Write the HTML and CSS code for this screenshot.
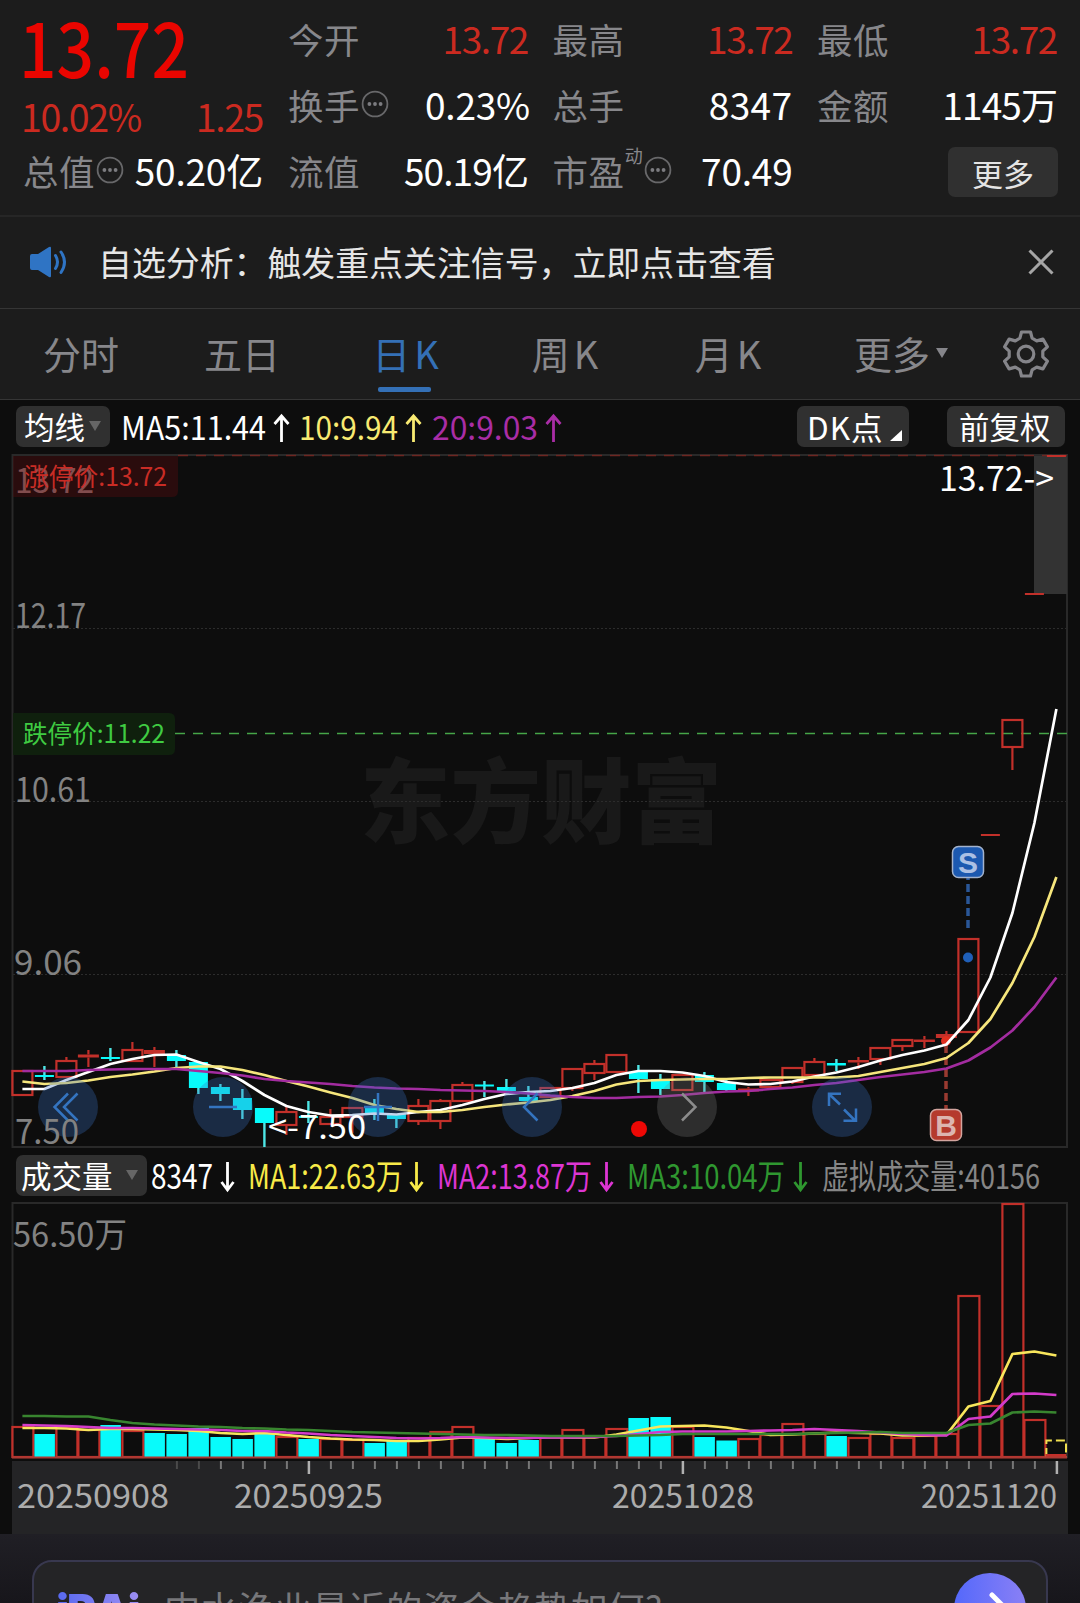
FILE: index.html
```html
<!DOCTYPE html>
<html lang="zh-CN">
  <head>
    <meta charset="UTF-8" />
    <meta name="viewport" content="width=device-width, initial-scale=1.0" />
    <title>日K</title>
    <link rel="stylesheet" href="styles.css">
  </head>
  <body>
    <svg class="defs" width="0" height="0">
      <symbol id="more-dots" viewBox="0 0 28 28">
        <circle cx="14" cy="14" r="12.4" fill="none" stroke="#68686a" stroke-width="1.8" />
        <circle cx="8.4" cy="14" r="1.9" fill="#7c7c80" />
        <circle cx="14" cy="14" r="1.9" fill="#7c7c80" />
        <circle cx="19.6" cy="14" r="1.9" fill="#7c7c80" />
      </symbol>
    </svg>

    <header class="quote">
      <div class="quote-main">
        <svg class="price" width="180" height="81" viewBox="0 0 180 81">
          <text x="-4" y="73" textLength="170" lengthAdjust="spacingAndGlyphs">13.72</text>
        </svg>
        <div class="change"><span>10.02%</span><span>1.25</span></div>
        <div class="cell">
          <span class="label">总值</span><svg class="dots"><use href="#more-dots" /></svg>
          <span class="value">50.20亿</span>
        </div>
      </div>
      <div class="quote-grid">
        <div class="cell"><span class="label">今开</span><span class="value up">13.72</span></div>
        <div class="cell"><span class="label">最高</span><span class="value up">13.72</span></div>
        <div class="cell"><span class="label">最低</span><span class="value up">13.72</span></div>
        <div class="cell">
          <span class="label">换手</span><svg class="dots"><use href="#more-dots" /></svg>
          <span class="value percent">0.23%</span>
        </div>
        <div class="cell"><span class="label">总手</span><span class="value wide">8347</span></div>
        <div class="cell"><span class="label">金额</span><span class="value tight">1145万</span></div>
        <div class="cell"><span class="label">流值</span><span class="value tight">50.19亿</span></div>
        <div class="cell">
          <span class="label">市盈</span><span class="sup">动</span><svg class="dots"><use href="#more-dots" /></svg>
          <span class="value">70.49</span>
        </div>
        <div class="cell"><button class="more">更多</button></div>
      </div>
    </header>

    <div class="notice">
      <svg class="speaker" width="40" height="34" viewBox="0 0 40 34">
        <path d="M3 9h6L20 2q2-1 2 1v28q0 2-2 1L9 25H3q-2 0-2-2V11q0-2 2-2z" fill="#2f74c4" />
        <path d="M26.500 10.500q4 6.500 0 13M32 7q7 10 0 20.500" fill="none" stroke="#2f74c4" stroke-width="3" stroke-linecap="round" />
      </svg>
      <span class="notice-text">自选分析：触发重点关注信号，立即点击查看</span>
      <svg class="close" width="26" height="26" viewBox="0 0 26 26">
        <path d="M1.500 1.500l23 23M24.500 1.500l-23 23" stroke="#a5a5a5" stroke-width="3" />
      </svg>
    </div>

    <nav class="tabs">
      <span class="tab">分时</span>
      <span class="tab">五日</span>
      <span class="tab active">日<b>K</b></span>
      <span class="tab">周<b>K</b></span>
      <span class="tab">月<b>K</b></span>
      <span class="tab last">更多<i class="caret"></i></span>
      <svg class="gear" width="50" height="50" viewBox="0 0 50 50" fill="none" stroke="#85858a" stroke-width="3.200" stroke-linejoin="round">
        <path d="M20.500 3h9l1.600 6.200 4.600 2.700 6.200-1.800 4.500 7.700-4.600 4.400v5.600l4.600 4.400-4.500 7.700-6.200-1.800-4.600 2.700L29.500 47h-9l-1.600-6.200-4.600-2.700-6.200 1.800-4.500-7.700 4.600-4.400v-5.600l-4.600-4.400 4.500-7.700 6.200 1.800 4.600-2.700z" />
        <circle cx="25" cy="25" r="7.800" />
      </svg>
    </nav>

    <section class="toolbar">
      <button class="pill ma">均线<i class="caret"></i></button>
      <svg class="legend" width="460" height="48" viewBox="118 402 460 48" font-size="32">
        <text x="121" y="441" textLength="145" lengthAdjust="spacingAndGlyphs" fill="#ffffff">MA5:11.44</text>
        <text x="299" y="441" textLength="99" lengthAdjust="spacingAndGlyphs" fill="#f8ea72">10:9.94</text>
        <text x="432" y="441" textLength="106" lengthAdjust="spacingAndGlyphs" fill="#a92da6">20:9.03</text>
        <path d="M281.500 443v-26m-7 8l7-8 7 8" stroke="#ffffff" />
        <path d="M413.500 443v-26m-7 8l7-8 7 8" stroke="#f8ea72" />
        <path d="M553.500 443v-26m-7 8l7-8 7 8" stroke="#a92da6" />
      </svg>
      <button class="pill dk">DK点<i class="corner"></i></button>
      <button class="pill adjust">前复权</button>
    </section>

    <svg id="price-chart" class="chart" width="1080" height="700" viewBox="0 450 1080 700"></svg>

    <section class="toolbar volume">
      <button class="pill vol">成交量<i class="caret"></i></button>
      <svg class="legend" width="920" height="50" viewBox="150 1151 920 50" font-size="34">
        <text x="151" y="1189" textLength="62" lengthAdjust="spacingAndGlyphs" fill="#ffffff">8347</text>
        <text x="248" y="1189" textLength="155" lengthAdjust="spacingAndGlyphs" fill="#f8ea48">MA1:22.63万</text>
        <text x="437" y="1189" textLength="155" lengthAdjust="spacingAndGlyphs" fill="#dd35d3">MA2:13.87万</text>
        <text x="627" y="1189" textLength="158" lengthAdjust="spacingAndGlyphs" fill="#2f9730">MA3:10.04万</text>
        <text x="822" y="1189" textLength="218" lengthAdjust="spacingAndGlyphs" fill="#868686">虚拟成交量:40156</text>
        <path d="M227.500 1162v28m-6-8l6 8 6-8" stroke="#ffffff" />
        <path d="M416.500 1162v28m-6-8l6 8 6-8" stroke="#f8ea48" />
        <path d="M606.500 1162v28m-6-8l6 8 6-8" stroke="#dd35d3" />
        <path d="M800.500 1162v28m-6-8l6 8 6-8" stroke="#2f9730" />
      </svg>
    </section>

    <svg id="volume-chart" class="chart" width="1080" height="334" viewBox="0 1200 1080 334"></svg>

    <footer class="ai">
      <div class="ask">
        <span class="logo">iRAi</span>
        <span class="question">中水渔业最近的资金趋势如何?</span>
        <span class="go">
          <svg width="72" height="72" viewBox="0 0 72 72">
            <path d="M20 36h32M38 22l14 14-14 14" fill="none" stroke="#fff" stroke-width="5" stroke-linecap="round" />
          </svg>
        </span>
      </div>
    </footer>

    <script src="script.js"></script>
  </body>
</html>
```

FILE: styles.css
```css
:root {
  --bg: #0d0d0d;
  --panel: #1c1c1c;
  --muted: #87878b;
  --up: #cb2a20;
  --blue: #3470b6;
}

* {
  margin: 0;
  padding: 0;
  box-sizing: border-box;
}

body {
  width: 1080px;
  height: 1603px;
  overflow: hidden;
  background: var(--bg);
  color: #fff;
  font-family: "Noto Sans CJK SC", sans-serif;
}

svg {
  display: block;
  flex: none;
}

.defs {
  position: absolute;
}

button {
  border: none;
  font-family: inherit;
  color: #fff;
  background: #303030;
  border-radius: 7px;
}

/* quote header */

.quote {
  display: flex;
  gap: 25px;
  height: 217px;
  padding: 5px 23px 0 23px;
  background: var(--panel);
  border-bottom: 2px solid #262626;
}

.quote-main {
  width: 240px;
  flex: none;
}

.price {
  overflow: visible;
  font-size: 75px;
  font-weight: 500;
  fill: #ea0500;
}

.change {
  display: flex;
  justify-content: space-between;
  height: 51px;
  margin-left: -2px;
  font-size: 37.5px;
  line-height: 60px;
  letter-spacing: -1.4px;
  color: var(--up);
}

.quote-grid {
  flex: 1;
  display: grid;
  grid-template-columns: repeat(3, 240px);
  grid-auto-rows: 66px;
  column-gap: 24.5px;
}

.cell {
  display: flex;
  align-items: center;
  height: 66px;
  white-space: nowrap;
}

.label {
  font-size: 35.5px;
  letter-spacing: 0.6px;
  color: var(--muted);
}

.value {
  margin-left: auto;
  font-size: 37px;
  letter-spacing: -0.2px;
}

.value.percent {
  margin-right: -2px;
}

.value.wide {
  letter-spacing: 0.4px;
}

.value.up {
  letter-spacing: -1.4px;
  color: var(--up);
}

.value.tight {
  letter-spacing: -0.9px;
}

.dots {
  width: 28px;
  height: 28px;
  margin-left: 1px;
}

.sup {
  align-self: flex-start;
  margin: 5px 0 0 0;
  font-size: 18px;
  color: var(--muted);
}

.more {
  width: 110px;
  height: 50px;
  margin: 4px -1px 0 auto;
  font-size: 31px;
  line-height: 45px;
  color: #e4e4e4;
}

/* notice */

.notice {
  display: flex;
  align-items: center;
  height: 92px;
  padding: 0 26px 2px 29px;
  background: var(--panel);
  border-bottom: 1px solid #353535;
}

.notice-text {
  margin-left: 29px;
  font-size: 33.9px;
  color: #e6e6e6;
}

.close {
  margin-left: auto;
}

/* period tabs */

.tabs {
  display: grid;
  grid-template-columns: 162px 160px 167px 152px 174px 186px 50px;
  align-items: center;
  height: 91px;
  background: var(--panel);
  border-bottom: 1px solid #353535;
}

.tab {
  display: flex;
  align-items: center;
  justify-content: center;
  position: relative;
  height: 90px;
  padding-bottom: 3px;
  font-size: 38px;
  color: var(--muted);
}

.tab.last {
  padding-right: 14px;
}

.tab b {
  margin-left: 4px;
  font-weight: 400;
}

.tab.active {
  color: var(--blue);
}

.tab.active::after {
  content: "";
  position: absolute;
  left: 56px;
  bottom: 7px;
  width: 53px;
  height: 5px;
  border-radius: 2px;
  background: var(--blue);
}

.caret {
  border: 6.5px solid transparent;
  border-top: 10px solid #666;
  border-bottom: none;
}

.tab .caret {
  margin-left: 6px;
  border-top-color: #85858a;
}

/* indicator rows */

.toolbar {
  display: flex;
  height: 50px;
  padding: 6px 0 0 16px;
}

.pill {
  display: flex;
  align-items: center;
  flex: none;
  height: 41px;
  padding-bottom: 1px;
  font-size: 30.5px;
}

.pill.ma {
  width: 94px;
  padding-left: 8px;
}

.pill .caret {
  margin-left: 4px;
}

.pill.dk {
  width: 112px;
  margin-left: 219px;
  padding-left: 10px;
  font-size: 31.5px;
  letter-spacing: 1px;
}

.pill.adjust {
  width: 118px;
  margin-left: 38px;
  padding-left: 12px;
}

.pill.vol {
  width: 131px;
  padding-left: 5px;
}

.pill.vol .caret {
  margin-left: 13px;
}

.corner {
  align-self: flex-end;
  margin: 0 0 5px 6px;
  border-left: 12px solid transparent;
  border-bottom: 11px solid #fff;
}

.legend {
  margin: -5px 0 0 8px;
}

.legend path {
  fill: none;
  stroke-width: 2.8;
}

.toolbar.volume {
  padding-top: 5px;
}

.toolbar.volume .legend {
  margin: -4px 0 0 3px;
}

/* charts */

.frame {
  fill: none;
  stroke: #292929;
  stroke-width: 2;
}

.grid {
  stroke: #2c2c2c;
  stroke-dasharray: 2 2;
}

.axis-label {
  font-size: 34px;
  fill: #828282;
}

.watermark {
  font-size: 92px;
  font-weight: 900;
  fill: #191919;
}

.rise {
  fill: none;
  stroke: #c2302a;
  stroke-width: 2.2;
}

.rise-flat {
  fill: #c2302a;
}

.fall {
  fill: #08fbfb;
}

.fall-wick {
  stroke: #4ee6e6;
  stroke-width: 2.4;
}

.ma-line {
  fill: none;
  stroke-width: 2.7;
  stroke-linejoin: round;
}

.control {
  fill: rgba(56, 113, 196, 0.3);
}

.control.off {
  fill: rgba(130, 130, 130, 0.28);
}

.control-icon {
  fill: none;
  stroke: #3474c0;
  stroke-width: 2.5;
}

.control-icon.off {
  stroke: #8c8c8c;
}

.badge-text {
  font: bold 30px "Liberation Sans", sans-serif;
  text-anchor: middle;
}

.date {
  font-size: 32px;
  fill: #acacac;
}

/* AI bar */

.ai {
  height: 69px;
  padding: 26px 32px 0;
  overflow: hidden;
  background: linear-gradient(#201f25, #17161b);
}

.ask {
  display: flex;
  align-items: center;
  height: 98px;
  padding: 0 20px 0 22px;
  border: 2px solid #38384f;
  border-radius: 20px;
  background: #242426;
}

.logo {
  width: 90px;
  margin-top: 1px;
  font: 900 44px Inter, sans-serif;
  letter-spacing: -2px;
  color: transparent;
  background: linear-gradient(90deg, #5668f0, #a291f2);
  background-clip: text;
  -webkit-background-clip: text;
}

.question {
  margin: -5px 0 0 18px;
  font-size: 36.4px;
  letter-spacing: 0.6px;
  color: #77777a;
}

.go {
  margin-left: auto;
  width: 72px;
  height: 72px;
  border-radius: 50%;
  background: linear-gradient(90deg, #5468fb, #8a80f5);
}
```

FILE: script.js
```js
const STEP = 22;
const cx = (i) => 22.4 + STEP * i;

// [rising, high, body top, body bottom, low] in chart pixels
const candles = [
  [1, 1071, 1071, 1095, 1095], [0, 1066, 1075, 1077, 1080], [1, 1057, 1061, 1077, 1077],
  [1, 1050, 1054.5, 1057.5, 1067], [0, 1048, 1057, 1059, 1061], [1, 1042, 1050, 1061, 1061],
  [1, 1047, 1050, 1054, 1067], [0, 1050, 1055, 1061, 1067], [0, 1062, 1062, 1088, 1094],
  [0, 1084, 1087, 1094, 1101], [0, 1089, 1098, 1110, 1119], [0, 1108, 1108, 1123, 1147],
  [1, 1107, 1112, 1125, 1135], [0, 1101, 1116, 1118, 1123], [1, 1109, 1117, 1124, 1125],
  [1, 1107, 1108, 1117, 1133], [0, 1099, 1107, 1114, 1120], [0, 1114, 1114, 1119, 1128],
  [1, 1099, 1106, 1121, 1125], [1, 1099, 1101, 1121, 1129], [1, 1082, 1085, 1101, 1101],
  [0, 1081, 1084.5, 1086.5, 1097], [0, 1079, 1087, 1091, 1091], [0, 1086, 1097, 1101, 1102],
  [1, 1087, 1088, 1097, 1097], [1, 1068, 1069, 1088, 1091], [1, 1060, 1064, 1073, 1080],
  [1, 1054, 1055, 1072, 1072], [0, 1065, 1072, 1079, 1093], [0, 1074, 1079, 1089, 1095],
  [1, 1074, 1075, 1090, 1090], [0, 1072, 1075, 1082, 1092], [0, 1080, 1083, 1090, 1091],
  [1, 1087, 1088.5, 1091.5, 1096], [1, 1080, 1080, 1087, 1090], [1, 1067, 1068, 1082, 1084],
  [1, 1058, 1062, 1075, 1075], [0, 1059, 1063, 1065.5, 1071], [1, 1057, 1060, 1062.5, 1069],
  [1, 1048, 1048, 1059, 1065], [1, 1040, 1040, 1046, 1051], [1, 1036, 1039.5, 1042, 1048],
  [1, 1031, 1034, 1038, 1048], [1, 939, 939, 1032, 1032], [1, 834, 834, 836, 836],
  [1, 720, 720, 747, 770], [1, 593, 593, 595, 595], [1, 455, 455, 457, 457],
];

const ma5 = [1089, 1089, 1080, 1072, 1064, 1059, 1055, 1054.5, 1062, 1069, 1081, 1095, 1106, 1112, 1115.5, 1115,
  1113.5, 1114.5, 1112, 1110, 1105, 1099, 1094, 1092, 1091, 1088, 1083, 1075, 1071, 1071, 1072.5, 1076, 1082,
  1084.5, 1084, 1081.5, 1076.5, 1072.5, 1067, 1060.5, 1055, 1050.5, 1044.5, 1020, 977.5, 913, 823, 709];
const ma10 = [1081.5, 1084, 1083, 1080.5, 1077, 1074.5, 1071.5, 1068, 1066.5, 1066.5, 1070, 1075, 1081, 1086.5,
  1092.5, 1098, 1105, 1109, 1112, 1112, 1110, 1107, 1104.5, 1102.5, 1100, 1096, 1091, 1084.5, 1081, 1080, 1079.5,
  1079, 1079, 1078, 1077.5, 1077.5, 1077.5, 1077.5, 1076, 1072, 1068, 1064, 1058, 1043, 1019, 983, 937, 877];
const ma20 = [1071, 1071, 1071, 1070, 1069.5, 1069, 1069, 1069, 1071, 1073, 1075.5, 1079, 1081, 1082.5, 1084, 1086,
  1087.5, 1088.5, 1089, 1090, 1090.5, 1091, 1092, 1093.5, 1095.5, 1097, 1098, 1098, 1097, 1096.5, 1095, 1093,
  1091.5, 1091, 1089, 1087.5, 1085, 1083, 1080, 1077, 1074.5, 1072, 1068.5, 1060.5, 1047.5, 1030.5, 1007, 977.5];

// volume bar tops, negative means a falling day
const volumes = [1427, -1434, 1427, 1430, -1425, 1431, -1433, -1434, -1428, -1437, -1439, -1434, 1437, -1439, 1439,
  1440, -1443, -1441, 1438, 1432, 1427, -1439, -1443, -1440, 1437, 1430, 1437, 1429, -1418, -1417, 1427, -1437,
  -1440.5, 1439, 1435, 1424, 1434, -1436, 1438, 1434, 1438, 1436, 1434, 1296, 1406, 1204, 1420, 1455];

const volMa1 = [1428, 1428, 1428.5, 1430, 1429, 1429, 1429.5, 1430, 1431, 1433, 1434, 1433, 1435, 1437, 1438.5,
  1439.5, 1440, 1441, 1441, 1439.5, 1437.5, 1438, 1439, 1438, 1437, 1437.5, 1437.5, 1434.5, 1430.5, 1426.5, 1426,
  1425.5, 1427.5, 1431, 1435, 1434.5, 1433.5, 1432.5, 1433, 1433.5, 1435.5, 1435.5, 1435, 1406.5, 1401, 1354,
  1351.5, 1355.5];
const volMa2 = [1425, 1425.5, 1426, 1427, 1428, 1428, 1428.5, 1429, 1429.5, 1430, 1431, 1431, 1432.5, 1433.5, 1435,
  1436, 1437, 1438, 1438.5, 1438, 1437, 1437.5, 1438, 1438, 1437.5, 1437.5, 1437, 1436, 1434, 1432, 1431.5, 1431.5,
  1431.5, 1431, 1430.5, 1430, 1429, 1430, 1431, 1432.5, 1434, 1435, 1435.5, 1419, 1416.5, 1394, 1393.5, 1395];
const volMa3 = [1416, 1416, 1416.5, 1416.5, 1420, 1423, 1424.5, 1425.5, 1426.5, 1427, 1428, 1428.5, 1429.5, 1430,
  1431, 1432, 1432.5, 1433, 1433.5, 1434, 1434.5, 1435, 1435, 1435.5, 1436, 1436, 1436, 1436, 1435.5, 1435, 1434,
  1434, 1434, 1434, 1434, 1434, 1433.5, 1433, 1432.5, 1432, 1433, 1433, 1433, 1425, 1423.5, 1412.5, 1411.5, 1412.5];

function line(values, color) {
  const points = values.map((y, i) => `${cx(i).toFixed(1)},${y}`).join(" ");
  return `<polyline class="ma-line" stroke="${color}" points="${points}"/>`;
}

function text(str, x, y, width, cls, extra = "") {
  return `<text class="${cls}" x="${x}" y="${y}" textLength="${width}" lengthAdjust="spacingAndGlyphs" ${extra}>${str}</text>`;
}

function candle([rising, high, top, bottom, low], i) {
  const x = cx(i);
  let out = "";
  if (rising) {
    if (high < top) out += `<path class="rise" d="M${x} ${high}V${top}"/>`;
    if (low > bottom) out += `<path class="rise" d="M${x} ${bottom}V${low}"/>`;
    out += bottom - top < 5
      ? `<rect class="rise-flat" x="${x - (top === high ? 9.5 : 10.5)}" y="${top}" width="${top === high ? 19 : 21}" height="${bottom - top}"/>`
      : `<rect class="rise" x="${x - 10}" y="${top}" width="20" height="${bottom - top}"/>`;
    return out;
  }
  return `<path class="fall-wick" d="M${x} ${high}V${low}"/>` +
    `<rect class="fall" x="${x - 9.5}" y="${top}" width="19" height="${bottom - top}"/>`;
}

function drawPrice() {
  let s = "";
  s += text("东方财富", 360, 836, 362, "watermark");
  s += [628, 801, 974].map((y) => `<path class="grid" d="M13 ${y + 0.5}H1067"/>`).join("");
  s += '<rect class="frame" x="12.500" y="455" width="1054.500" height="692"/>';
  s += '<rect x="1034" y="456" width="33" height="138" fill="#333"/>';
  s += '<path d="M178 455.500H1067" stroke="#6e2621" stroke-width="1.500" stroke-dasharray="10 8"/>';
  s += '<path d="M175 733.500H1067" stroke="#46a548" stroke-width="1.500" stroke-dasharray="10 8"/>';
  s += candles.map(candle).join("");

  // buy and sell marks
  s += '<circle cx="946" cy="1041" r="5" fill="#e0301f"/><circle cx="968" cy="957.500" r="5" fill="#1f5fb8"/>';
  s += '<path d="M946 1045V1109" stroke="#993a30" stroke-width="3.500" stroke-dasharray="8 4"/>';
  s += '<path d="M968 872V928" stroke="#2a5798" stroke-width="3.500" stroke-dasharray="8 4"/>';

  s += line(ma5, "#ffffff") + line(ma10, "#f6e67c") + line(ma20, "#a32ca0");

  s += '<rect x="952.500" y="846.500" width="31" height="31" rx="6" fill="#1c59b0" stroke="#a3b3cd" stroke-width="1.500"/>';
  s += '<text class="badge-text" x="968" y="873" fill="#abc0e4">S</text>';
  s += '<rect x="930.500" y="1109.500" width="31" height="31" rx="6" fill="#b53a2d" stroke="#d3a59f" stroke-width="1.500"/>';
  s += '<text class="badge-text" x="946" y="1136" fill="#dcb5b0">B</text>';

  s += text("13.72", 15, 493, 79, "axis-label", 'style="fill:#9c7777"');
  s += text("12.17", 15, 628, 71, "axis-label");
  s += text("10.61", 15, 802, 76, "axis-label");
  s += text("9.06", 14, 975, 68, "axis-label");

  // price limits
  s += '<path d="M13 456H178V491q0 6-6 6H13z" fill="#5a0a0e" fill-opacity=".38"/>';
  s += text("涨停价:13.72", 24, 486, 143, "limit", 'font-size="25" fill="#c92c25"');
  s += '<path d="M13 713H169q6 0 6 6V749q0 6-6 6H13z" fill="#0f200d"/>';
  s += text("跌停价:11.22", 23, 743, 142, "limit", 'font-size="25" fill="#3fcb42"');
  s += text("13.72-&gt;", 939, 491, 115, "last", 'font-size="34" fill="#fff"');

  const circles = [68, 223, 378, 532, 687, 842];
  s += circles.map((x) => `<circle class="control${x === 687 ? " off" : ""}" cx="${x}" cy="1107" r="30"/>`).join("");
  s += '<path class="control-icon" d="M68 1093.500L54.500 1107L68 1120.500M77.500 1093.500L64 1107L77.500 1120.500M209 1107H237M364 1107H392M378 1093V1121M537.500 1093.500L524 1107L537.500 1120.500"/>';
  s += '<path class="control-icon off" d="M682 1093.500L695.500 1107L682 1120.500"/>';
  s += '<path class="control-icon" d="M840 1104.500L829 1094M829 1106V1093.700H841M844 1109.500L855 1120.500M856 1108.500V1120.700H843.500"/>';
  s += '<circle cx="639" cy="1129" r="8" fill="#ee0805"/>';
  s += text("7.50", 15, 1144, 64, "axis-label");
  s += text("&lt;-7.50", 268, 1139, 98, "low", 'font-size="33" fill="#fff"');

  document.getElementById("price-chart").innerHTML = s;
}

function drawVolume() {
  let s = '<path class="frame" d="M12.500 1458V1203H1067V1458"/>';
  s += text("56.50万", 13, 1247, 114, "axis-label");

  volumes.forEach((v, i) => {
    const x = cx(i);
    const top = Math.abs(v);
    if (i === volumes.length - 1) {
      s += `<path d="M${x - 10} 1457V1440.500H1066V1457" fill="none" stroke="#f0e050" stroke-width="2" stroke-dasharray="9 4"/>`;
      s += `<rect class="rise-flat" x="${x - 11}" y="1454" width="21" height="4"/>`;
    } else if (v < 0) {
      s += `<rect x="${x - 10}" y="${top}" width="20.500" height="${1457 - top}" class="fall"/>`;
    } else {
      s += `<rect x="${x - 10}" y="${top}" width="21" height="${1457 - top}" class="rise"/>`;
    }
  });
  s += '<path d="M12 1457.500H1067" stroke="#aa3a34" stroke-width="2"/>';
  s += line(volMa1, "#f8e65c") + line(volMa2, "#d33bca") + line(volMa3, "#38852f");

  // date axis
  s += '<rect x="12" y="1461" width="1056" height="73" fill="#242426"/>';
  for (let i = 7; i < 48; i++) {
    const major = i === 13 || i === 30 || i === 47;
    s += `<path d="M${cx(i) + 0.5} 1461V${major ? 1474 : 1469}" stroke="${major ? "#b0b0b0" : i < 9 ? "#4a4a4a" : "#777"}" stroke-width="${major ? 2.5 : 2}"/>`;
  }
  s += text("20250908", 17, 1508, 152, "date");
  s += text("20250925", 234, 1508, 149, "date");
  s += text("20251028", 612, 1508, 142, "date");
  s += text("20251120", 921, 1508, 136, "date");

  document.getElementById("volume-chart").innerHTML = s;
}

drawPrice();
drawVolume();
```
